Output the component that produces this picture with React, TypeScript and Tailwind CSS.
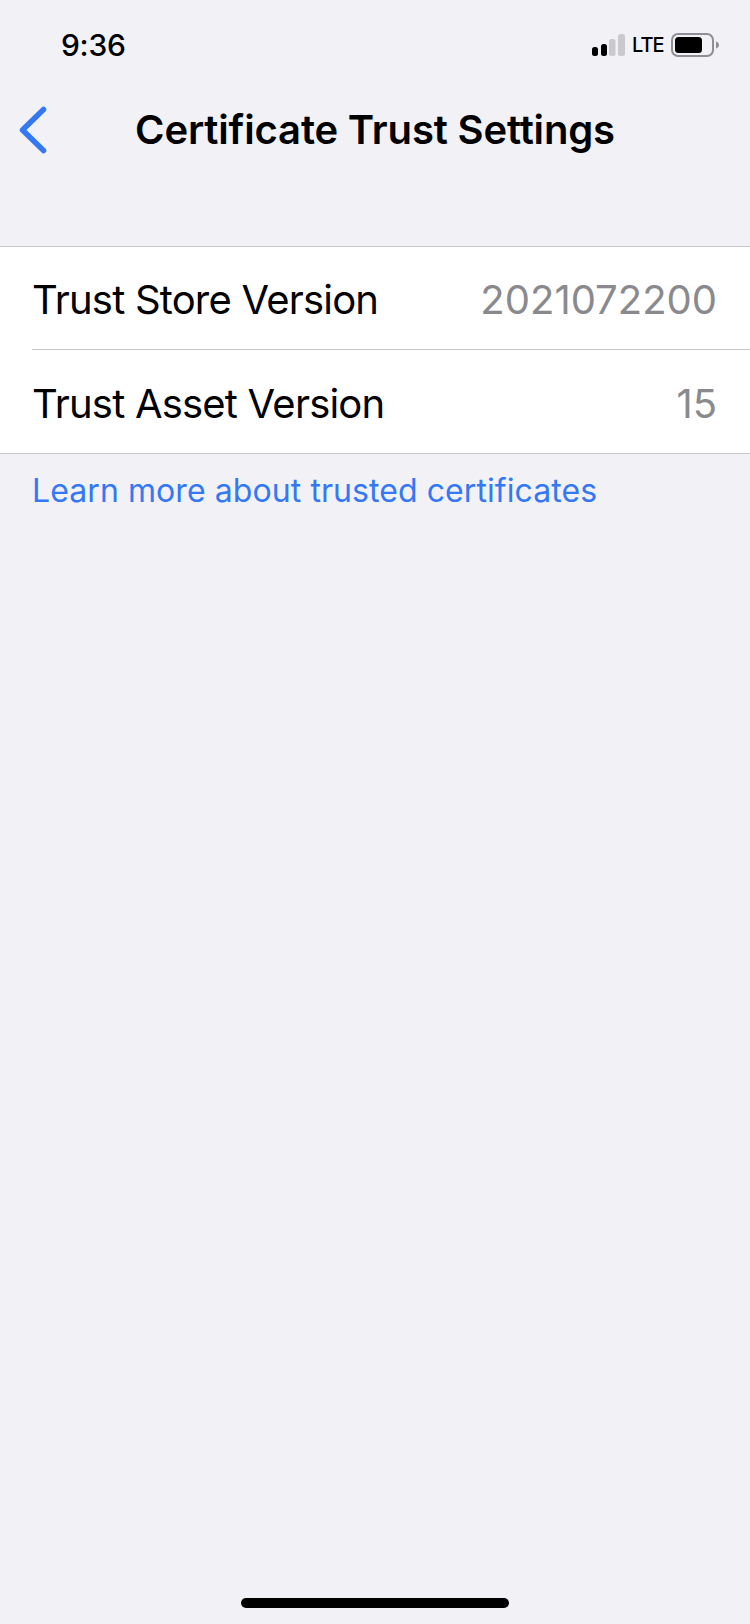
export default function App() {
    const rows = [
        {label: "Trust Store Version", value: "2021072200", height: "h-[102px]"},
        {label: "Trust Asset Version", value: "15", height: "h-[103px]"},
    ];

    return (
        <div className="w-[750px] h-[1624px] bg-[#f1f1f6] flex flex-col font-['Inter','Liberation_Sans',sans-serif] overflow-hidden">
            <div className="h-[90px] flex items-center justify-between pl-[61px] pr-[31px]">
                <span className="text-[30px] font-medium text-black tracking-[-0.3px]">9:36</span>
                <div className="flex items-center">
                    <svg width="34" height="22" viewBox="0 0 34 22" className="mr-[7px]">
                        <rect x="1" y="13" width="6" height="9" rx="2.5" fill="#000"/>
                        <rect x="10" y="10" width="6" height="12" rx="2.5" fill="#000"/>
                        <rect x="18" y="5" width="6.5" height="17" rx="2.5" fill="#c9c9ce"/>
                        <rect x="27" y="0" width="7" height="22" rx="2.5" fill="#c9c9ce"/>
                    </svg>
                    <span className="w-[31px] text-[20px] leading-none font-medium text-black mr-[8px] tracking-[-1px]">LTE</span>
                    <svg width="48" height="24" viewBox="0 0 48 24">
                        <rect x="1" y="1" width="41" height="22" rx="6" fill="none" stroke="#8e8e93" strokeWidth="2"/>
                        <rect x="4" y="4" width="27" height="16" rx="3.5" fill="#000"/>
                        <path d="M45 8.5c2 .6 3 2 3 3.5s-1 2.900-3 3.500z" fill="#8e8e93"/>
                    </svg>
                </div>
            </div>

            <div className="h-[80px] relative flex items-center justify-center">
                <svg width="30" height="50" viewBox="0 0 30 50" className="absolute left-[18px] top-[15px]">
                    <path d="M25.500 4.500 4.500 25l21 20.500" fill="none" stroke="#3478f6" strokeWidth="5.5" strokeLinecap="round" strokeLinejoin="round"/>
                </svg>
                <h1 className="text-[40px] font-semibold text-black tracking-[-0.16px]">Certificate Trust Settings</h1>
            </div>

            <div className="mt-[76px] bg-white border-y border-[#c8c8cc]">
                {rows.map((row, i) => (
                    <div key={row.label}>
                        {i > 0 && <div className="ml-[32px] h-px bg-[#c8c8cc]"/>}
                        <div className={`${row.height} flex items-center justify-between pt-[4px] pl-[32px] pr-[33px] text-[40px]`}>
                            <span className="text-black tracking-[-0.8px]">{row.label}</span>
                            <span className="text-[#8a8a8e]">{row.value}</span>
                        </div>
                    </div>
                ))}
            </div>

            <a className="mt-[15px] pl-[32px] text-[32px] leading-[44px] text-[#3478f6] tracking-[0.08px]">
                Learn more about trusted certificates
            </a>

            <div className="mt-auto mb-[16px] mx-auto w-[268px] h-[10px] rounded-full bg-black"/>
        </div>
    );
}
